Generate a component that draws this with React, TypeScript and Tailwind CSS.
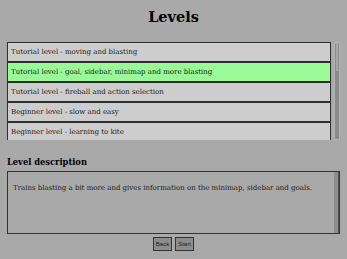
import React from "react";

const items = [
  "Tutorial level - moving and blasting",
  "Tutorial level - goal, sidebar, minimap and more blasting",
  "Tutorial level - fireball and action selection",
  "Beginner level - slow and easy",
  "Beginner level - learning to kite",
];

export default function App() {
  return (
    <div
      className="w-[347px] h-[259px] bg-[#a9a9a9] flex flex-col px-[7px] pt-[8px] text-[#1a1a1a]"
      style={{ fontFamily: '"DejaVu Serif", serif' }}
    >
      <div className="text-center text-[14.5px] leading-[18px] font-bold text-black">Levels</div>
      <div className="mt-[16px] flex gap-[3px]">
        <div className="w-[324px] h-[98px] overflow-hidden flex flex-col">
          {items.map((t, i) => (
            <div
              key={i}
              className={`h-[20px] shrink-0 border border-[#2e2e2e] flex items-center pl-[3px] pt-[1px] text-[7px] ${
                i === 1 ? "bg-[#98fb98]" : "bg-[#cdcdcd]"
              }`}
            >
              {t}
            </div>
          ))}
        </div>
        <div className="w-[6px] h-[98px] bg-[#b4b4b4] p-[1px]">
          <div className="w-full h-full bg-[#8a8a8a] px-[1px]">
            <div className="w-full h-[28px] bg-[#a8a8a8]" />
          </div>
        </div>
      </div>
      <div className="mt-[16px] text-[8.3px] leading-[12px] font-bold text-black">Level description</div>
      <div className="mt-[3px] h-[63px] border border-[#333] flex">
        <div className="flex-1 pl-[5px] pt-[12px] text-[7px] leading-[9px]">
          Trains blasting a bit more and gives information on the minimap, sidebar and goals.
        </div>
        <div className="w-[4px] bg-[#8e8e8e]" />
        <div className="w-[1px] bg-[#555]" />
      </div>
      <div className="mt-[3px] flex justify-center gap-[3px]" style={{ fontFamily: '"Liberation Sans", sans-serif' }}>
        <div className="w-[19px] h-[14px] border border-[#333] bg-[#8c8c8c] flex items-center justify-center text-[6px] text-[#222]">
          Back
        </div>
        <div className="w-[19px] h-[14px] border border-[#333] bg-[#8c8c8c] flex items-center justify-center text-[6px] text-[#222]">
          Start
        </div>
      </div>
    </div>
  );
}
